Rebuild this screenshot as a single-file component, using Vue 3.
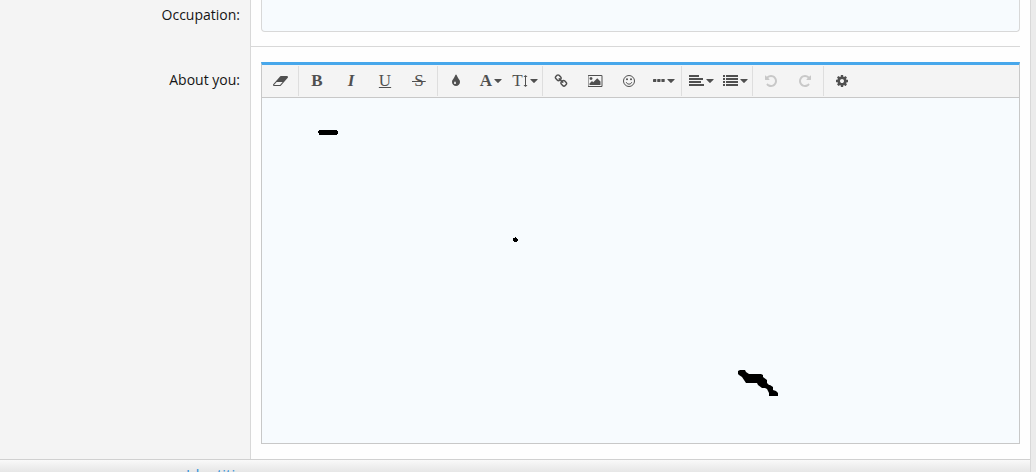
<script setup>
import { ref } from 'vue'

const occupation = ref('')
const about = ref('')

const eraser = 'M896 1408l336-384h-768l-336 384h768zm1013-1077q15 34 9.5 71.5t-30.5 65.5l-896 1024q-38 44-96 44h-768q-38 0-69.5-20.5t-47.5-54.5q-15-34-9.5-71.5t30.5-65.5l896-1024q38-44 96-44h768q38 0 69.5 20.5t47.5 54.5z'
const drop = 'M896 1152q0-36-20-69-1-1-15.5-22.5t-25.5-38-25-44-21-50.5q-4-16-21-16t-21 16q-7 23-21 50.5t-25 44-25.5 38-15.5 22.5q-20 33-20 69 0 53 37.5 90.5t90.5 37.5 90.5-37.5 37.5-90.5zm512-128q0 212-150 362t-362 150-362-150-150-362q0-145 81-275 6-9 62.5-90.5t101-151 99.5-178 83-201.5q9-30 34-47t51-17 51.5 17 33.5 47q28 93 83 201.5t99.5 178 101 151 62.5 90.5q81 127 81 275z'
const link = 'M1520 1216q0-40-28-68l-208-208q-28-28-68-28-42 0-72 32 3 3 19 18.5t21.5 21.5 15 19 13 25.5 3.5 27.5q0 40-28 68t-68 28q-15 0-27.5-3.5t-25.5-13-19-15-21.5-21.5-18.5-19q-33 31-33 73 0 40 28 68l206 207q27 27 68 27 40 0 68-26l147-146q28-28 28-67zm-703-705q0-40-28-68l-206-207q-28-28-68-28-39 0-68 27l-147 146q-28 28-28 67 0 40 28 68l208 208q27 27 68 27 42 0 72-31-3-3-19-18.5t-21.5-21.5-15-19-13-25.5-3.5-27.5q0-40 28-68t68-28q15 0 27.5 3.5t25.5 13 19 15 21.5 21.5 18.5 19q33-31 33-73zm895 705q0 120-85 203l-147 146q-83 83-203 83-121 0-204-85l-206-207q-83-83-83-203 0-123 88-209l-88-88q-86 88-208 88-120 0-204-84l-208-208q-84-84-84-204t85-203l147-146q83-83 203-83 121 0 204 85l206 207q83 83 83 203 0 123-88 209l88 88q86-88 208-88 120 0 204 84l208 208q84 84 84 204z'
const picture = 'M576 576q0 80-56 136t-136 56-136-56-56-136 56-136 136-56 136 56 56 136zm1024 384v448h-1408v-192l320-320 160 160 512-512zm96-704h-1600q-13 0-22.5 9.5t-9.5 22.5v1216q0 13 9.5 22.5t22.5 9.5h1600q13 0 22.5-9.5t9.5-22.5v-1216q0-13-9.5-22.5t-22.5-9.5zm160 32v1216q0 66-47 113t-113 47h-1600q-66 0-113-47t-47-113v-1216q0-66 47-113t113-47h1600q66 0 113 47t47 113z'
const undo = 'M1664 896q0 156-61 298t-164 245-245 164-298 61q-172 0-327-72.5t-264-204.5q-7-10-6.5-22.5t8.5-20.5l137-138q10-9 25-9 16 2 23 12 73 95 179 147t225 52q104 0 198.5-40.5t163.5-109.5 109.5-163.5 40.5-198.5-40.5-198.5-109.5-163.5-163.5-109.5-198.5-40.5q-98 0-188 35.5t-160 101.5l137 138q31 30 14 69-17 40-59 40h-448q-26 0-45-19t-19-45v-448q0-42 40-59 39-17 69 14l130 129q107-101 244.5-156.5t284.5-55.5q156 0 298 61t245 164 164 245 61 298z'
const cog = 'M1152 896q0-106-75-181t-181-75-181 75-75 181 75 181 181 75 181-75 75-181zm512-109v222q0 12-8 23t-20 13l-185 28q-19 54-39 91 35 50 107 138 10 12 10 25t-9 23q-27 37-99 108t-94 71q-12 0-26-9l-138-108q-44 23-91 38-16 136-29 186-7 28-36 28h-222q-14 0-24.5-8.5t-11.5-21.5l-28-184q-49-16-90-37l-141 107q-10 9-25 9-14 0-25-11-126-114-165-168-7-10-7-23 0-12 8-23 15-21 51-66.5t54-70.5q-27-50-41-99l-183-27q-13-2-21-12.5t-8-23.5v-222q0-12 8-23t19-13l186-28q14-46 39-92-40-57-107-138-10-12-10-24 0-10 9-23 26-36 98.5-107.5t94.5-71.5q13 0 26 10l138 107q44-23 91-38 16-136 29-186 7-28 36-28h222q14 0 24.5 8.5t11.5 21.5l28 184q49 16 90 37l142-107q9-9 24-9 13 0 25 10 129 119 165 170 7 8 7 22 0 12-8 23-15 21-51 66.5t-54 70.5q26 50 41 98l183 28q13 2 21 12.5t8 23.5z'

const groups = [
  [{ name: 'Remove formatting', path: eraser, box: 1920 }],
  [
    { name: 'Bold', glyph: 'B', style: 'bold' },
    { name: 'Italic', glyph: 'I', style: 'italic' },
    { name: 'Underline', glyph: 'U', style: 'underline' },
    { name: 'Strike-through', glyph: 'S', style: 'strike' }
  ],
  [
    { name: 'Text color', path: drop, box: 1792 },
    { name: 'Font family', glyph: 'A', style: 'bold', menu: true },
    { name: 'Font size', glyph: 'T', style: 'size', arrow: true, menu: true }
  ],
  [
    { name: 'Insert link', path: link, box: 1792 },
    { name: 'Insert image', path: picture, box: 1920 },
    { name: 'Smilies', drawing: 'smile' },
    { name: 'Insert', drawing: 'dots', menu: true }
  ],
  [
    { name: 'Alignment', drawing: 'align', menu: true },
    { name: 'List', drawing: 'list', menu: true }
  ],
  [
    { name: 'Undo', path: undo, box: 1792, disabled: true },
    { name: 'Redo', path: undo, box: 1792, disabled: true, flip: true }
  ],
  [{ name: 'Toggle BB code', path: cog, box: 1792 }]
]
</script>

<template>
  <div class="page">
    <form class="panel" @submit.prevent>
      <div class="row">
        <div class="term"><label for="occupation">Occupation:</label></div>
        <div class="field ruled">
          <input id="occupation" v-model="occupation" class="text-input" type="text" />
        </div>
      </div>

      <div class="row">
        <div class="term about-term"><label for="about">About you:</label></div>
        <div class="field about-field">
          <div class="editor">
            <div class="toolbar" role="toolbar" aria-label="Text formatting">
              <div v-for="(group, g) in groups" :key="g" class="group">
                <button
                  v-for="tool in group"
                  :key="tool.name"
                  class="tool"
                  :class="{ 'has-menu': tool.menu }"
                  type="button"
                  :aria-label="tool.name"
                  :disabled="tool.disabled"
                >
                  <svg
                    v-if="tool.path"
                    :class="{ flip: tool.flip }"
                    :width="tool.box / 128"
                    height="14"
                    :viewBox="`0 0 ${tool.box} 1792`"
                  >
                    <path :d="tool.path" />
                  </svg>
                  <span v-if="tool.glyph" class="glyph" :class="tool.style">{{ tool.glyph }}</span>
                  <svg v-if="tool.arrow" width="5" height="14" viewBox="0 0 5 14">
                    <path d="M2 3h1v8h1.500L2.500 13 .5 11H2zM.5 3 2.500 1 4.500 3H3v8H2V3z" />
                  </svg>
                  <svg v-if="tool.drawing === 'smile'" width="14" height="14" viewBox="0 0 14 14">
                    <circle class="line" cx="7" cy="7" r="5.500" />
                    <circle cx="5" cy="5.300" r="1" />
                    <circle cx="9" cy="5.300" r="1" />
                    <path class="line" d="M4.200 8.200q.8 2 2.800 2t2.800-2" />
                  </svg>
                  <svg v-if="tool.drawing === 'dots'" width="12" height="14" viewBox="0 0 12 14">
                    <rect y="5" width="3.300" height="3" rx=".4" />
                    <rect x="4.200" y="5" width="3.300" height="3" rx=".4" />
                    <rect x="8.400" y="5" width="3.300" height="3" rx=".4" />
                  </svg>
                  <svg v-if="tool.drawing === 'align'" width="15" height="14" viewBox="0 0 15 14">
                    <path d="M0 1h10v2H0zM0 4h14v2H0zM0 7h12v2H0zM0 10h15v2H0z" />
                  </svg>
                  <svg v-if="tool.drawing === 'list'" width="15" height="14" viewBox="0 0 15 14">
                    <path d="M0 1h2v2H0zM0 4h2v2H0zM0 7h2v2H0zM0 10h2v2H0zM3 1h12v2H3zM3 4h12v2H3zM3 7h12v2H3zM3 10h12v2H3z" />
                  </svg>
                  <svg v-if="tool.menu" class="caret" width="8" height="14" viewBox="0 0 8 14">
                    <path d="M.5 5h7q.5 0 .2.400L4.400 8.800q-.4.400-.8 0L.3 5.400Q0 5 .5 5z" />
                  </svg>
                </button>
              </div>
            </div>
            <div class="canvas">
              <textarea id="about" v-model="about" class="body"></textarea>
              <svg class="ink dash" width="20" height="6" viewBox="0 0 20 6">
                <path d="M1 1h18v1h1v3h-1v1H1V4H0V2h1z" />
              </svg>
              <svg class="ink dot" width="5" height="5" viewBox="0 0 5 5">
                <path d="M2 0h1v1h1v1h1v2H4v1H1V4H0V1h2z" />
              </svg>
              <svg class="ink stroke" width="40" height="26" viewBox="0 0 40 26">
                <path d="M2 0h5l1 2 3 2h12l2 1v2l4 3v3l2 2h1l3 2v3l3 1 2 2v3l-2 2h-5l-2-2v-3l-2-4-2-1h-3l-4-3-1-2H8L4 7 1 5 0 4V1z" />
              </svg>
            </div>
          </div>
        </div>
      </div>

      <div class="footer"><a href="#identities">Identities</a></div>
    </form>
  </div>
</template>

<style>
body {
  margin: 0;
  background: #ebebeb;
}
</style>

<style scoped>
.page {
  padding-right: 5px;
  font-family: "Open Sans", "Noto Sans", sans-serif;
  font-size: 14px;
  line-height: 20px;
  color: #141414;
}
.panel {
  overflow: hidden;
  background: #fefefe;
  border-right: 1px solid #d8d8d8;
}
.row {
  display: flex;
}
.term {
  box-sizing: border-box;
  flex: 0 0 251px;
  padding: 5px 10px 0 0;
  text-align: right;
  background: #f4f4f4;
  border-right: 1px solid #d8d8d8;
}
.about-term {
  padding-top: 23px;
}
.field {
  flex: 1;
  min-width: 0;
  padding: 0 10px;
}
.ruled {
  margin-right: 10px;
  padding: 0 0 14px 10px;
  border-bottom: 1px solid #d8d8d8;
}
.text-input {
  display: block;
  box-sizing: border-box;
  width: 100%;
  height: 32px;
  padding: 0 8px;
  font: inherit;
  background: #f7fbfe;
  border: 1px solid #d8d8d8;
  border-top: 0;
  border-radius: 0 0 4px 4px;
  outline: none;
}
.about-field {
  padding-top: 15px;
  padding-bottom: 15px;
}
.editor {
  border: 1px solid #c8c8c8;
  border-top: 3px solid #47a7eb;
}
.toolbar {
  display: flex;
  background: #f4f4f4;
  border-bottom: 1px solid #c8c8c8;
}
.group {
  display: flex;
  margin: 1px 0;
  padding: 0 1px;
  border-right: 1px solid #dedede;
}
.group:last-child {
  border-right: 0;
}
.tool {
  box-sizing: border-box;
  display: flex;
  align-items: center;
  justify-content: center;
  width: 34px;
  height: 30px;
  padding: 0;
  color: #505050;
  background: none;
  border: 0;
}
.has-menu {
  padding-left: 2px;
}
.tool:disabled {
  color: #c8c8c8;
}
.tool svg {
  flex: none;
  fill: currentColor;
}
.tool .line {
  fill: none;
  stroke: currentColor;
  stroke-width: 1;
}
.flip {
  transform: scaleX(-1);
}
.caret {
  margin-left: 2px;
}
.glyph {
  font-family: "Liberation Serif", serif;
  font-size: 17px;
  line-height: 20px;
}
.bold {
  font-weight: bold;
}
.italic {
  font-style: italic;
  font-weight: bold;
}
.underline {
  text-decoration: underline;
}
.strike {
  padding: 0 2px;
  background: linear-gradient(currentColor, currentColor) center / 100% 1px no-repeat;
}
.canvas {
  position: relative;
}
.body {
  display: block;
  box-sizing: border-box;
  width: 100%;
  height: 345px;
  padding: 10px;
  font: inherit;
  background: #f7fbfe;
  border: 0;
  outline: none;
  resize: none;
}
.ink {
  position: absolute;
  pointer-events: none;
}
.dash {
  top: 31px;
  left: 56px;
}
.dot {
  top: 139px;
  left: 251px;
}
.stroke {
  top: 272px;
  left: 476px;
}
.footer {
  box-sizing: border-box;
  height: 13px;
  padding: 4px 0 0 186px;
  overflow: hidden;
  font-size: 15px;
  background: linear-gradient(#f9f9f9, #e6e6e6);
  border-top: 1px solid #d0d0d0;
}
.footer a {
  color: #2f8fd8;
  text-decoration: none;
}
</style>
